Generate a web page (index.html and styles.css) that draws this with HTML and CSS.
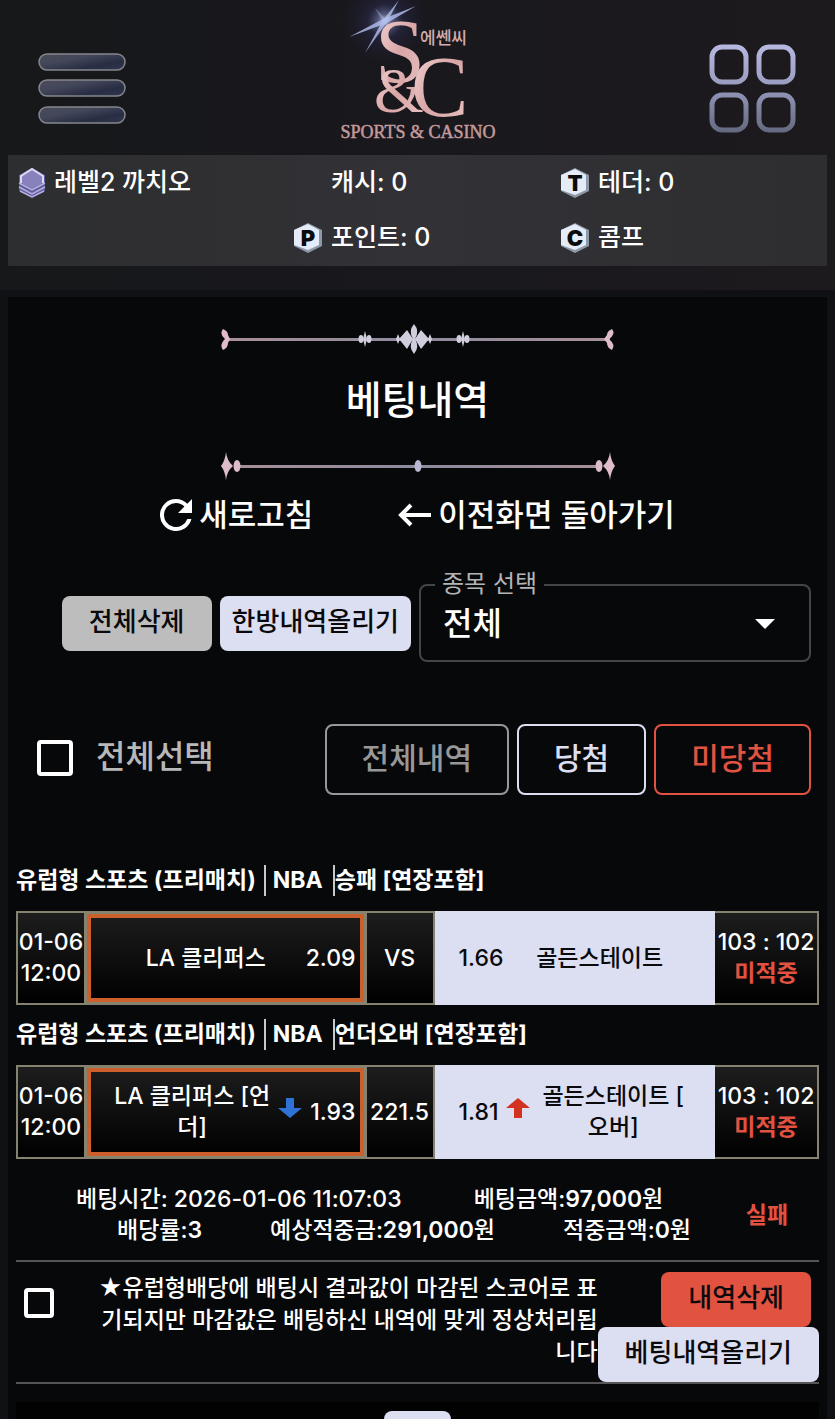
FILE: index.html
```html
<!DOCTYPE html>
<html lang="ko">

<head>
    <meta charset="UTF-8">
    <meta name="viewport" content="width=device-width, initial-scale=1.0">
    <title>베팅내역</title>
    <link rel="stylesheet" href="styles.css">
</head>

<body>
    <header class="site-header">
        <div class="top-bar">
            <button type="button" class="icon-btn" aria-label="메뉴">
                <svg width="88" height="72" viewBox="0 0 88 72">
                    <defs>
                        <linearGradient id="bar" x1="0" y1="0" x2="1" y2="1">
                            <stop offset="0" stop-color="#4b4c59" />
                            <stop offset="0.35" stop-color="#43475a" />
                            <stop offset="0.7" stop-color="#272d43" />
                            <stop offset="1" stop-color="#30364c" />
                        </linearGradient>
                    </defs>
                    <g fill="url(#bar)" stroke="#85868d" stroke-width="1.5">
                        <rect x="1" y="1" width="86" height="16" rx="8" />
                        <rect x="1" y="27" width="86" height="16" rx="8" />
                        <rect x="1" y="54" width="86" height="16" rx="8" />
                    </g>
                </svg>
            </button>
            <a href="/" class="logo" aria-label="S&amp;C Sports &amp; Casino">
                <svg width="180" height="148" viewBox="0 0 180 148">
                    <defs>
                        <linearGradient id="rose" x1="0" y1="0" x2="1" y2="1">
                            <stop offset="0" stop-color="#f6dcdc" />
                            <stop offset="0.5" stop-color="#d9a5a6" />
                            <stop offset="1" stop-color="#eac6c6" />
                        </linearGradient>
                        <radialGradient id="glow">
                            <stop offset="0" stop-color="#e8edff" />
                            <stop offset="0.15" stop-color="#9aa8e8" stop-opacity="0.6" />
                            <stop offset="0.4" stop-color="#3b3a7a" stop-opacity="0.35" />
                            <stop offset="1" stop-color="#231d3d" stop-opacity="0" />
                        </radialGradient>
                    </defs>
                    <circle cx="57" cy="21" r="44" fill="url(#glow)" opacity="0.8" />
                    <g fill="#b4c0f0">
                        <path d="M71 0 L59 22 L37 53 L55 20 Z" opacity="0.8" />
                        <path d="M21 37 L55 19 L88 6 L59 23 Z" opacity="0.8" />
                        <path d="M47 8 L58 19 L62 30 L55 22 Z" opacity="0.4" />
                    </g>
                    <g fill="url(#rose)">
                        <text x="47" y="82" class="logo-s">S</text>
                        <text x="46" y="112" class="logo-and">&amp;</text>
                        <text x="83" y="116" class="logo-c">C</text>
                    </g>
                    <text x="92" y="44" class="logo-korean">에쎈씨</text>
                    <text x="90" y="138" text-anchor="middle" class="logo-name">SPORTS &amp; CASINO</text>
                </svg>
            </a>
            <button type="button" class="icon-btn" aria-label="전체 메뉴">
                <svg width="88" height="90" viewBox="0 0 88 90">
                    <defs>
                        <linearGradient id="tile" gradientUnits="userSpaceOnUse" x1="0" y1="0" x2="0" y2="90">
                            <stop offset="0" stop-color="#b9b8e2" />
                            <stop offset="0.42" stop-color="#9c9ec2" />
                            <stop offset="1" stop-color="#62677e" />
                        </linearGradient>
                    </defs>
                    <g fill="none" stroke="url(#tile)" stroke-width="5">
                        <rect x="3" y="3" width="34" height="35" rx="10" />
                        <rect x="50" y="3" width="34" height="35" rx="10" />
                        <rect x="3" y="51" width="34" height="35" rx="10" />
                        <rect x="50" y="51" width="34" height="35" rx="10" />
                    </g>
                </svg>
            </button>
        </div>

        <div class="user-bar">
            <div class="user-item">
                <svg width="28" height="32" viewBox="0 0 28 32">
                    <path d="M14 1 L27 8 V24 L14 31 L1 24 V8 Z" fill="#5f5b9c" />
                    <path d="M14 2 L25 9 V16 L14 22 L3 16 V9 Z" fill="#8782bd" />
                    <path d="M3 16 V9 L14 2 L25 9 V16" fill="none" stroke="#dcd9f4" stroke-width="2" />
                    <path d="M1 16 L14 23 L27 16 M1 20 L14 27 L27 20 M2 24 L14 30 L26 24" fill="none" stroke="#b5b1de" stroke-width="1.5" />
                </svg>
                <span>레벨2 까치오</span>
            </div>
            <div class="user-item no-icon"><span>캐시: 0</span></div>
            <div class="user-item">
                <svg width="30" height="32" viewBox="0 0 30 32">
                    <path d="M15 1 L29 8 V24 L15 31 L1 24 V8 Z" fill="#8d99a8" />
                    <path d="M15 2 L26 8 V23 L15 28 L1 23 V8 Z" fill="#e6ecf7" />
                    <text x="15" y="24" class="coin">T</text>
                </svg>
                <span>테더: 0</span>
            </div>
            <div class="user-item point">
                <svg width="30" height="32" viewBox="0 0 30 32">
                    <path d="M15 1 L29 8 V24 L15 31 L1 24 V8 Z" fill="#8d99a8" />
                    <path d="M15 2 L26 8 V23 L15 28 L1 23 V8 Z" fill="#e6ecf7" />
                    <text x="15" y="24" class="coin">P</text>
                </svg>
                <span>포인트: 0</span>
            </div>
            <div class="user-item">
                <svg width="30" height="32" viewBox="0 0 30 32">
                    <path d="M15 1 L29 8 V24 L15 31 L1 24 V8 Z" fill="#8d99a8" />
                    <path d="M15 2 L26 8 V23 L15 28 L1 23 V8 Z" fill="#e6ecf7" />
                    <text x="15" y="24" class="coin">C</text>
                </svg>
                <span>콤프</span>
            </div>
        </div>
    </header>

    <main class="content">
        <div class="page-title">
            <svg width="396" height="34" viewBox="0 0 396 34">
                <defs>
                    <linearGradient id="line" gradientUnits="userSpaceOnUse" x1="0" y1="0" x2="396" y2="0">
                        <stop offset="0" stop-color="#e0bcc8" />
                        <stop offset="0.5" stop-color="#b9b6cf" />
                        <stop offset="1" stop-color="#e0bcc8" />
                    </linearGradient>
                </defs>
                <g fill="url(#line)">
                    <rect x="6" y="16" width="384" height="3" opacity="0.75" />
                    <path d="M3 7 Q8 9 8 13 L10 17 L8 21 Q8 26 3 28 Q-1 23 5 17 Q-1 12 3 7 Z" />
                    <path d="M392 7 Q387 9 387 13 L384 17 L387 21 Q387 26 392 28 Q396 23 389 17 Q396 12 392 7 Z" />
                </g>
                <g fill="#d0cddd">
                    <path d="M194 2 Q200 9 195 17 Q200 25 194 32 Q188 25 193 17 Q188 9 194 2 Z" />
                    <path d="M193 17 L187 8 L179 17 L187 27 Z M195 17 L201 8 L209 17 L201 27 Z" />
                    <path d="M178 12 L180 17 L178 22 L176 17 Z M210 12 L212 17 L210 22 L208 17 Z" />
                    <path d="M145 9 L147 17 L145 25 L143 17 Z M243 9 L245 17 L243 25 L241 17 Z" />
                    <ellipse cx="141" cy="17" rx="2.5" ry="4" />
                    <ellipse cx="149" cy="17" rx="2.5" ry="4" />
                    <ellipse cx="239" cy="17" rx="2.5" ry="4" />
                    <ellipse cx="247" cy="17" rx="2.5" ry="4" />
                </g>
            </svg>
            <h1>베팅내역</h1>
            <svg width="396" height="32" viewBox="0 0 396 32">
                <g fill="url(#line)">
                    <rect x="16" y="15" width="364" height="3" opacity="0.75" />
                    <path d="M6 2 Q7 11 13 16 Q7 21 6 30 Q5 21 1 16 Q5 11 6 2 Z" />
                    <path d="M390 2 Q389 11 383 16 Q389 21 390 30 Q391 21 395 16 Q391 11 390 2 Z" />
                    <ellipse cx="17" cy="16" rx="3.5" ry="6" />
                    <ellipse cx="379" cy="16" rx="3.5" ry="6" />
                    <ellipse cx="198" cy="16" rx="3.5" ry="6" />
                </g>
            </svg>
        </div>

        <nav class="actions">
            <a href="#refresh">
                <svg width="32" height="32" viewBox="4 4 16 16" fill="#fff">
                    <path d="M17.65 6.35A7.96 7.96 0 0 0 12 4a8 8 0 1 0 7.73 10h-2.08A6 6 0 1 1 12 6c1.66 0 3.14.69 4.22 1.78L13 11h7V4z" />
                </svg>
                새로고침
            </a>
            <a href="#back">
                <svg width="34" height="24" viewBox="0 0 34 24" fill="none" stroke="#fff" stroke-width="4">
                    <path d="M34 12 H4 M14 2 L4 12 L14 22" />
                </svg>
                이전화면 돌아가기
            </a>
        </nav>

        <form class="filters">
            <button type="button" class="btn btn-grey">전체삭제</button>
            <button type="button" class="btn btn-light btn-tight">한방내역올리기</button>
            <div class="select-field">
                <label for="sport">종목 선택</label>
                <select id="sport">
                    <option>전체</option>
                </select>
                <svg width="20" height="10" viewBox="0 0 20 10">
                    <path d="M0 0 H20 L10 10 Z" fill="#fff" />
                </svg>
            </div>
        </form>

        <div class="select-row">
            <input type="checkbox" id="checkAll" class="check-lg">
            <label for="checkAll">전체선택</label>
            <button type="button" class="tab tab-grey">전체내역</button>
            <button type="button" class="tab tab-light">당첨</button>
            <button type="button" class="tab tab-red">미당첨</button>
        </div>

        <section class="bet">
            <h2><span>유럽형 스포츠 (프리매치)</span><span class="league">NBA</span><span>승패 [연장포함]</span></h2>
            <table class="match">
                <tr>
                    <td class="time">01-06<br>12:00</td>
                    <td class="picked">
                        <div class="team home"><span class="name">LA 클리퍼스</span><span>2.09</span></div>
                    </td>
                    <td class="versus">VS</td>
                    <td class="away-cell">
                        <div class="team away"><span>1.66</span><span class="name">골든스테이트</span></div>
                    </td>
                    <td class="score">103 : 102<br><b>미적중</b></td>
                </tr>
            </table>

            <h2><span>유럽형 스포츠 (프리매치)</span><span class="league">NBA</span><span>언더오버 [연장포함]</span></h2>
            <table class="match">
                <tr>
                    <td class="time">01-06<br>12:00</td>
                    <td class="picked">
                        <div class="team home">
                            <span class="name">LA 클리퍼스 [언더]</span>
                            <svg width="24" height="20" viewBox="0 0 24 20">
                                <path d="M8 0 H16 V10 H24 L12 20 L0 10 H8 Z" fill="#2f72d6" />
                            </svg>
                            <span>1.93</span>
                        </div>
                    </td>
                    <td class="versus">221.5</td>
                    <td class="away-cell">
                        <div class="team away">
                            <span>1.81</span>
                            <svg width="24" height="20" viewBox="0 0 24 20">
                                <path d="M12 0 L24 10 H16 V20 H8 V10 H0 Z" fill="#d2321f" />
                            </svg>
                            <span class="name">골든스테이트 [오버]</span>
                        </div>
                    </td>
                    <td class="score">103 : 102<br><b>미적중</b></td>
                </tr>
            </table>

            <div class="summary">
                <div class="summary-info">
                    <p>
                        <span>베팅시간: 2026-01-06 11:07:03</span>
                        <span>베팅금액:<b>97,000</b>원</span>
                    </p>
                    <p class="totals">
                        <span>배당률:<b>3</b></span>
                        <span>예상적중금:<b>291,000</b>원</span>
                        <span>적중금액:<b>0</b>원</span>
                    </p>
                </div>
                <b class="result">실패</b>
            </div>

            <div class="bet-footer">
                <input type="checkbox" class="check-sm" aria-label="내역 선택">
                <p>★유럽형배당에 배팅시 결과값이 마감된 스코어로 표기되지만 마감값은 배팅하신 내역에 맞게 정상처리됩니다</p>
                <div class="bet-buttons">
                    <button type="button" class="btn btn-red">내역삭제</button>
                    <button type="button" class="btn btn-light">베팅내역올리기</button>
                </div>
            </div>
        </section>

        <div class="pager">
            <button type="button" aria-label="1 페이지"></button>
        </div>
    </main>
</body>

</html>
```
FILE: styles.css
```css
* {
    box-sizing: border-box;
}

body {
    display: flex;
    flex-direction: column;
    height: 100vh;
    margin: 0;
    overflow: hidden;
    background-color: #101114;
    color: #ffffff;
    font-family: Inter, "Noto Sans CJK KR", sans-serif;
    font-size: 23px;
    font-weight: 500;
    line-height: 31px;
}

h1,
h2,
p {
    margin: 0;
}

button,
select {
    font-family: inherit;
    font-weight: 500;
    cursor: pointer;
}

a {
    color: #ffffff;
    text-decoration: none;
}

/* header */
.site-header {
    flex: none;
    padding: 0 8px 24px;
    background: linear-gradient(90deg, #16181a, #19181d 50%, #1d1a1e);
}

.top-bar {
    display: flex;
    justify-content: space-between;
    height: 155px;
    padding: 0 30px;
}

.icon-btn {
    padding: 26px 0 0;
    background: none;
    border: none;
}

.logo-s,
.logo-and,
.logo-c,
.logo-name {
    font-family: "Liberation Serif", serif;
    font-weight: normal;
}

.logo-s {
    font-size: 90px;
}

.logo-and {
    font-size: 64px;
}

.logo-c {
    font-size: 86px;
}

.logo-korean {
    font-family: "Noto Sans CJK KR", sans-serif;
    font-size: 17px;
    fill: #d3adae;
}

.logo-name {
    font-size: 18px;
    fill: #c4999b;
    stroke: #c4999b;
    stroke-width: 0.5px;
}

.user-bar {
    display: grid;
    grid-template-columns: 275px 267px 1fr;
    grid-auto-rows: 55px;
    height: 111px;
    padding-left: 10px;
    background: linear-gradient(90deg, #2d2e2f, #323136 50%, #2e2e30);
    font-size: 25px;
}

.user-item {
    display: flex;
    align-items: center;
    gap: 8px;
}

.no-icon {
    padding-left: 38px;
}

.point {
    grid-column: 2;
}

.coin {
    font-family: Inter, sans-serif;
    font-size: 22px;
    font-weight: 900;
    text-anchor: middle;
    fill: #0a0b0d;
}

/* main */
.content {
    display: flex;
    flex: 1;
    flex-direction: column;
    margin: 7px 8px 0;
    background-color: #07080a;
}

.page-title {
    display: flex;
    flex-direction: column;
    align-items: center;
    padding-top: 25px;
}

h1 {
    font-size: 39px;
    font-weight: 500;
    line-height: 56px;
    margin: 16px 0 22px;
}

.actions {
    display: flex;
    justify-content: center;
    gap: 84px;
    padding-top: 7px;
    font-size: 31px;
    line-height: 52px;
}

.actions a {
    display: flex;
    align-items: center;
    gap: 7px;
}

.filters {
    display: flex;
    align-items: center;
    justify-content: flex-end;
    gap: 8px;
    margin-top: 43px;
    padding: 0 16px;
}

.btn {
    height: 55px;
    padding: 0 27px 8px;
    border: none;
    border-radius: 8px;
    color: #0a0a0c;
    font-size: 26px;
    white-space: nowrap;
}

.btn-tight {
    padding: 0 12px 8px;
}

.btn-grey {
    background-color: #bdbdbd;
}

.btn-light {
    background-color: #dcdef1;
}

.btn-red {
    background-color: #e25241;
}

.select-field {
    position: relative;
    width: 392px;
}

.select-field label {
    position: absolute;
    top: -16px;
    left: 16px;
    padding: 0 7px;
    background-color: #07080a;
    color: #b4b4b6;
    font-size: 24px;
    font-weight: 400;
}

.select-field select {
    width: 100%;
    height: 78px;
    padding: 0 22px;
    appearance: none;
    background: transparent;
    border: 2px solid #454548;
    border-radius: 8px;
    color: #ffffff;
    font-size: 32px;
}

.select-field svg {
    position: absolute;
    top: 35px;
    right: 36px;
    pointer-events: none;
}

.select-row {
    display: flex;
    align-items: center;
    gap: 8px;
    margin-top: 62px;
    padding: 0 16px 0 29px;
}

.select-row label {
    margin: 0 auto 0 15px;
    padding-bottom: 6px;
    color: #b8b8b8;
    font-size: 32px;
}

.check-lg,
.check-sm {
    flex: none;
    appearance: none;
    margin: 0;
    border: 4px solid #ffffff;
    border-radius: 4px;
}

.check-lg {
    width: 36px;
    height: 36px;
    margin-bottom: 4px;
}

.tab {
    height: 71px;
    padding: 0 35px 8px;
    background: transparent;
    border: 2px solid;
    border-radius: 8px;
    font-size: 30px;
}

.tab-grey {
    color: #98989a;
}

.tab-light {
    color: #dcdef1;
}

.tab-red {
    color: #e25241;
}

/* bet slip */
.bet {
    margin-top: 70px;
    padding: 0 8px;
}

h2 {
    display: flex;
    font-size: 23px;
    font-weight: bold;
    margin-bottom: 15px;
}

h2 .league {
    margin-left: 8px;
    padding: 0 10px 0 7px;
    border: solid #c9c9c9;
    border-width: 0 2px;
}

.match {
    width: 100%;
    margin-bottom: 14px;
    border-collapse: collapse;
    table-layout: fixed;
    text-align: center;
}

.match td {
    height: 92px;
    padding: 0;
    border: 2px solid #858270;
    background: linear-gradient(#1d1d1d, #000000);
    white-space: nowrap;
}

.match .time,
.match .versus {
    width: 68px;
}

.match .score {
    width: 104px;
}

.match .picked {
    box-shadow: inset 0 0 0 1px #858270, inset 0 0 0 5px #cb602c;
}

.match .away-cell {
    background: #dcdef1;
    border-color: #dcdef1;
    color: #0a0a0c;
}

.team {
    display: flex;
    align-items: center;
    gap: 8px;
}

.home {
    padding: 0 9px 0 28px;
}

.away {
    padding: 0 25px 0 24px;
}

.team svg {
    flex: none;
    margin-bottom: 8px;
}

.team .name {
    flex: 1;
    white-space: normal;
    line-break: anywhere;
}

b {
    font-weight: 600;
}

.score b,
.result {
    color: #e25241;
    font-weight: bold;
}

.summary {
    display: flex;
    align-items: center;
    padding: 11px 0 14px;
    border-bottom: 2px solid #555557;
}

.summary-info {
    flex: 1;
    padding: 0 24px 0 60px;
}

.summary-info p {
    display: flex;
    gap: 72px;
    white-space: nowrap;
}

.summary-info .totals {
    gap: 68px;
    justify-content: flex-end;
}

.result {
    width: 104px;
    text-align: center;
}

.bet-footer {
    display: flex;
    padding: 10px 0 0 8px;
    border-bottom: 2px solid #555557;
}

.check-sm {
    width: 30px;
    height: 30px;
    margin-top: 16px;
}

.bet-footer p {
    flex: 1;
    padding-left: 38px;
    line-height: 32px;
    text-align: right;
}

.bet-buttons {
    display: flex;
    flex: none;
    flex-direction: column;
    align-items: flex-end;
}

.bet-buttons .btn-red {
    margin-right: 8px;
}

.pager {
    flex: 1;
    margin: 18px 8px 0;
    padding-top: 9px;
    overflow: hidden;
    background-color: #020203;
    text-align: center;
}

.pager button {
    width: 67px;
    height: 55px;
    background-color: #dcdef1;
    border: none;
    border-radius: 8px;
}
```
